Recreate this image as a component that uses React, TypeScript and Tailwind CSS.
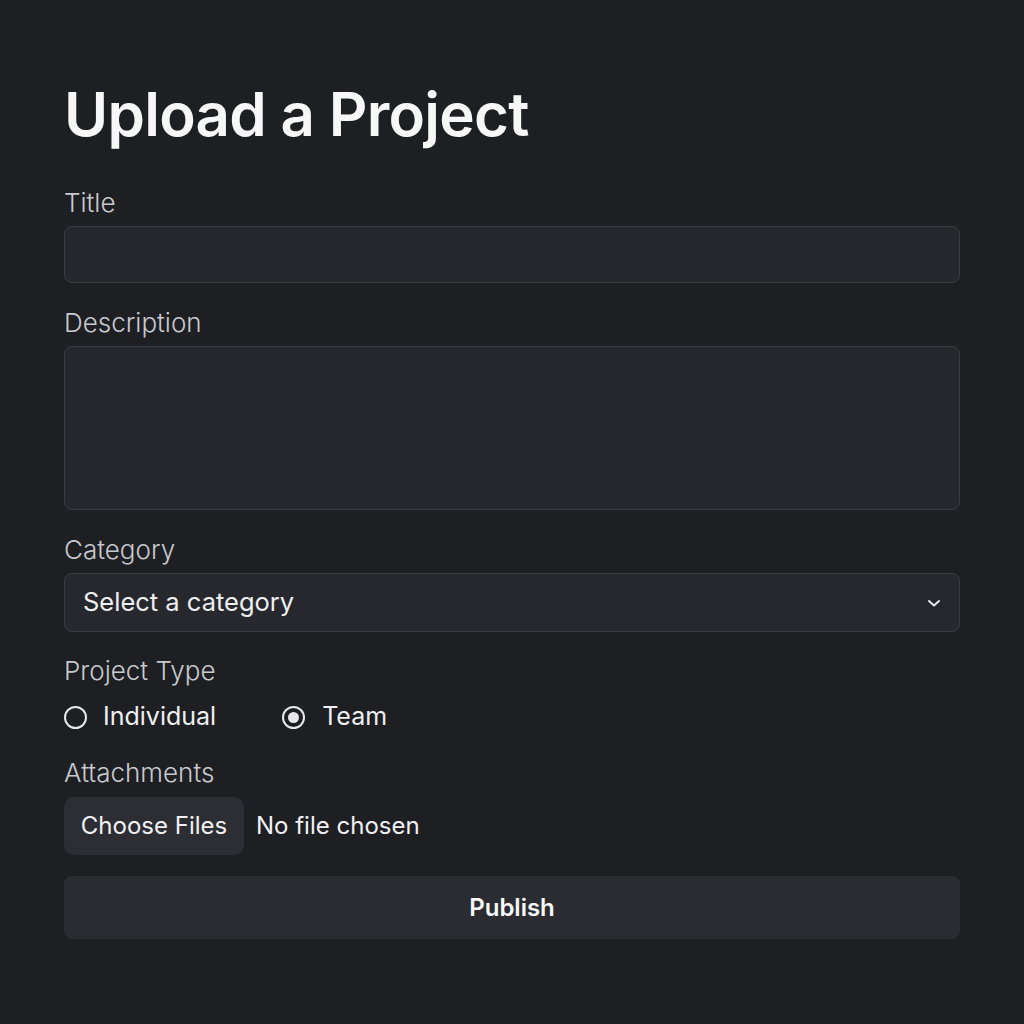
import React from "react";

export default function App() {
  const font = { fontFamily: "Inter, 'Noto Sans', sans-serif" };
  return (
    <div className="w-[1024px] h-[1024px] bg-[#1e1f23] text-white" style={font}>
      <div className="px-16 pt-[78px] flex flex-col">
        <h1 className="text-[60px] leading-[72px] font-semibold tracking-[-0.7px] text-[#f7f7f8]">Upload a Project</h1>
        <label className="mt-[38px] text-[26px] leading-[30px] font-light text-[#c8cad0]">Title</label>
        <input className="mt-[8px] h-[57px] w-full rounded-lg bg-[#25272c] border border-[#3a3d44] outline-none px-4" />
        <label className="mt-[25px] text-[26px] leading-[30px] font-light text-[#c8cad0]">Description</label>
        <textarea className="mt-[8px] h-[164px] w-full rounded-lg bg-[#25272c] border border-[#3a3d44] outline-none resize-none p-4" />
        <label className="mt-[25px] text-[26px] leading-[30px] font-light text-[#c8cad0]">Category</label>
        <div className="mt-[8px] h-[59px] w-full rounded-lg bg-[#26282d] border border-[#3a3d44] flex items-center justify-between pl-[18px] pr-[18px]">
          <span className="text-[25.5px] text-[#eeeff1]">Select a category</span>
          <svg width="14" height="10" viewBox="0 0 14 10" fill="none">
            <path d="M2 3l5 4.5L12 3" stroke="#e8e8ea" strokeWidth="2" strokeLinecap="round" strokeLinejoin="round" />
          </svg>
        </div>
        <label className="mt-[24px] text-[26px] leading-[30px] font-light text-[#c8cad0]">Project Type</label>
        <div className="mt-[16px] flex items-center h-[30px]">
          <div className="flex items-center">
            <span className="w-[23px] h-[23px] rounded-full border-[2px] border-[#e8e8ea] bg-[#1e1f23]" />
            <span className="ml-[16px] text-[25px] text-[#eeeff1]">Individual</span>
          </div>
          <div className="flex items-center ml-[66px]">
            <span className="w-[23px] h-[23px] rounded-full border-[2px] border-[#e8e8ea] bg-[#1e1f23] flex items-center justify-center">
              <span className="w-[11px] h-[11px] rounded-full bg-[#e8e8ea]" />
            </span>
            <span className="ml-[17px] text-[25px] text-[#eeeff1]">Team</span>
          </div>
        </div>
        <label className="mt-[26px] text-[26px] leading-[30px] font-light text-[#c8cad0]">Attachments</label>
        <div className="mt-[9px] flex items-center">
          <button className="h-[58px] w-[180px] rounded-[10px] bg-[#2c2e33] text-[24px] text-[#f1f1f3]">Choose Files</button>
          <span className="ml-[12px] text-[24px] text-[#f1f1f3]">No file chosen</span>
        </div>
        <button className="mt-[21px] h-[63px] w-full rounded-lg bg-[#2a2c31] text-[24px] font-semibold text-[#f7f7f8]">Publish</button>
      </div>
    </div>
  );
}
